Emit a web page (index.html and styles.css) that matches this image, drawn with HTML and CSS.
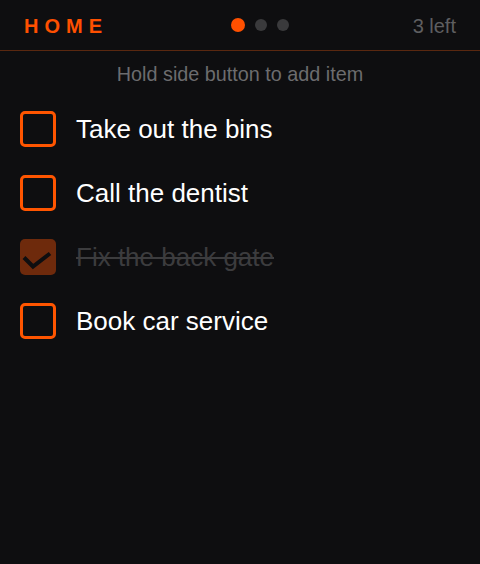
FILE: index.html
```html
<!DOCTYPE html>
<html>
<head>
<meta charset="utf-8">
<link rel="stylesheet" href="styles.css">
</head>
<body>
<div class="app">
  <header class="top">
    <div class="title">HOME</div>
    <div class="dots">
      <span class="dot dot-active"></span>
      <span class="dot"></span>
      <span class="dot"></span>
    </div>
    <div class="count">3 left</div>
  </header>
  <div class="hint">Hold side button to add item</div>
  <ul class="list">
    <li class="item"><span class="box"></span><span class="label">Take out the bins</span></li>
    <li class="item"><span class="box"></span><span class="label">Call the dentist</span></li>
    <li class="item done"><span class="box box-done"><svg class="check" viewBox="0 0 36 36" width="36" height="36"><polyline points="4,18.5 13,27.5 30,14.5" fill="none" stroke="#0e0e10" stroke-width="4"/></svg></span><span class="label">Fix the back gate</span></li>
    <li class="item"><span class="box"></span><span class="label">Book car service</span></li>
  </ul>
</div>
</body>
</html>
```
FILE: styles.css
```css
html, body {
  margin: 0;
  padding: 0;
  background: #0e0e10;
}
body {
  font-family: "Liberation Sans", Arial, sans-serif;
  width: 480px;
  height: 564px;
  overflow: hidden;
}
.app {
  display: flex;
  flex-direction: column;
}
.top {
  box-sizing: border-box;
  border-bottom: 1px solid #5a2810;
  display: flex;
  align-items: center;
  justify-content: space-between;
  padding: 0 24px;
  height: 51px;
}
.title {
  color: #ff5000;
  font-weight: bold;
  font-size: 20px;
  letter-spacing: 6px;
  line-height: 24px;
  padding-top: 2px;
}
.dots {
  display: flex;
  align-items: center;
  gap: 10px;
}
.dot {
  width: 12px;
  height: 12px;
  border-radius: 50%;
  background: #3a3a3c;
}
.dot-active {
  width: 14px;
  height: 14px;
  background: #ff5000;
}
.count {
  color: #5e5e60;
  font-size: 20px;
  line-height: 24px;
  padding-top: 2px;
}
.hint {
  color: #6c6c6e;
  font-size: 19.8px;
  line-height: 24px;
  text-align: center;
  padding-top: 11px;
}
.list {
  list-style: none;
  margin: 0;
  padding: 11px 0 0 20px;
}
.item {
  height: 64px;
  display: flex;
  align-items: center;
  gap: 20px;
}
.box {
  width: 36px;
  height: 36px;
  box-sizing: border-box;
  border: 3px solid #ff5500;
  border-radius: 5px;
  flex: none;
}
.box-done {
  border: none;
  background: #6e2a0c;
}
.check {
  display: block;
}
.label {
  color: #ffffff;
  font-size: 26px;
  line-height: 30px;
}
.done .label {
  color: #3c3c3e;
  text-decoration: line-through;
}
```
